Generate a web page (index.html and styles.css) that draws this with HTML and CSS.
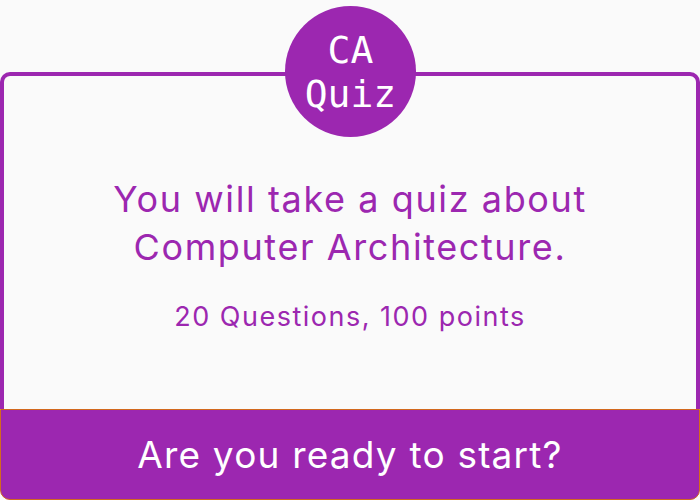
FILE: index.html
```html
<!DOCTYPE html>
<html>
<head>
<meta charset="utf-8">
<link rel="stylesheet" href="styles.css">
</head>
<body>
<div class="card">
  <div class="badge"><span>CA</span><span>Quiz</span></div>
  <div class="card-body">
    <h1 class="title">You will take a quiz about<br>Computer Architecture.</h1>
    <p class="meta">20 Questions, 100 points</p>
  </div>
  <div class="start-bar">Are you ready to start?</div>
</div>
</body>
</html>
```

FILE: styles.css
```css
html, body {
  margin: 0;
  padding: 0;
  background: #fafafa;
  width: 700px;
  height: 500px;
  overflow: hidden;
}

.card {
  position: relative;
  margin-top: 72px;
  height: 428px;
  display: flex;
  flex-direction: column;
  font-family: Inter, "Noto Sans", sans-serif;
}

.badge {
  position: absolute;
  left: 285px;
  top: -66px;
  width: 131px;
  height: 131px;
  border-radius: 50%;
  background: #9c27b0;
  color: #ffffff;
  font-family: "DejaVu Sans Mono", monospace;
  font-size: 38px;
  line-height: 44px;
  display: flex;
  flex-direction: column;
  align-items: center;
  justify-content: center;
  z-index: 2;
}

.card-body {
  flex: 1;
  border: 4px solid #9c27b0;
  border-bottom: none;
  border-radius: 10px 10px 0 0;
  display: flex;
  flex-direction: column;
  align-items: center;
  padding-top: 99px;
  box-sizing: border-box;
}

.title {
  margin: 0;
  font-size: 36px;
  line-height: 48px;
  font-weight: 400;
  letter-spacing: 1.6px;
  color: #9c27b0;
  text-align: center;
}

.meta {
  margin: 30px 0 0;
  font-size: 27px;
  line-height: 32px;
  letter-spacing: 1.5px;
  color: #9c27b0;
  text-align: center;
}

.start-bar {
  height: 91px;
  box-sizing: border-box;
  background: #9c27b0;
  border: 1px solid #d2691e;
  border-radius: 0 0 10px 10px;
  color: #ffffff;
  font-size: 37px;
  letter-spacing: 1.2px;
  display: flex;
  align-items: center;
  justify-content: center;
}
```
